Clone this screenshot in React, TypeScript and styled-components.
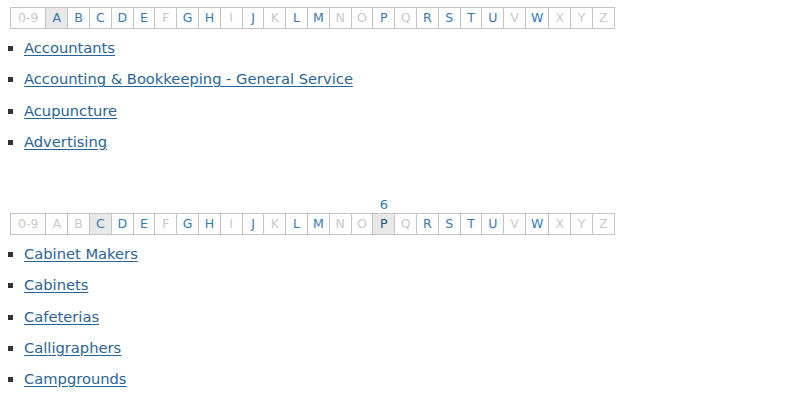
import React from "react";
import styled, { createGlobalStyle } from "styled-components";

const GlobalStyle = createGlobalStyle`
  html, body {
    margin: 0;
    padding: 0;
    background: #ffffff;
  }
  body {
    font-family: "DejaVu Sans", Verdana, sans-serif;
    font-size: 14.7px;
    color: #333333;
  }
`;

const Page = styled.div`
  display: flex;
  flex-direction: column;
  padding: 7px 0 0 10px;
`;

const Section = styled.section<{ $gap?: number }>`
  display: flex;
  flex-direction: column;
  align-items: flex-start;
  margin-top: ${(p) => p.$gap ?? 0}px;
`;

const AlphaBar = styled.div`
  display: inline-flex;
  border: 1px solid #c4c4c4;
  font-size: 12.5px;
  line-height: 20px;
`;

const Letter = styled.a<{ $state: "on" | "off" | "active" | "hover"; $wide?: boolean }>`
  position: relative;
  display: block;
  padding: 0 ${(p) => (p.$wide ? 7 : 5)}px;
  min-width: 10.8px;
  text-align: center;
  text-decoration: none;
  border-left: 1px solid #c4c4c4;
  color: ${(p) =>
    p.$state === "off" ? "#c9c9c9" : p.$state === "hover" ? "#23527c" : "#337ab7"};
  background: ${(p) => (p.$state === "active" || p.$state === "hover" ? "#e8e8e8" : "#ffffff")};
  &:first-child {
    border-left: none;
  }
`;

const Count = styled.span`
  position: absolute;
  left: 0;
  right: 0;
  bottom: 100%;
  margin-bottom: 2px;
  text-align: center;
  font-size: 13px;
  line-height: 15px;
  color: #337ab7;
`;

const List = styled.ul`
  margin: 8px 0 0 -10px;
  padding: 0 0 0 24px;
  list-style: square;
`;

const Item = styled.li`
  line-height: 21px;
  margin-bottom: 10.3px;
  &::marker {
    color: #333333;
  }
`;

const Link = styled.a`
  color: #2a6496;
  text-decoration: underline;
  text-underline-offset: 2px;
`;

const letters = ["0-9", ..."ABCDEFGHIJKLMNOPQRSTUVWXYZ".split("")];
const enabled = "ABCDEGHJLMPRSTUW";

type Bar = { active: string; off: string; hover?: string; count?: number };

const Alphabet = ({ active, off, hover, count }: Bar) => (
  <AlphaBar>
    {letters.map((l) => {
      const isOff = l === "0-9" || !enabled.includes(l) || off.includes(l);
      const state =
        l === active ? "active" : l === hover ? "hover" : isOff ? "off" : "on";
      return (
        <Letter key={l} $state={state} $wide={l.length > 1}>
          {l === hover && count != null && <Count>{count}</Count>}
          {l}
        </Letter>
      );
    })}
  </AlphaBar>
);

const first = ["Accountants", "Accounting & Bookkeeping - General Service", "Acupuncture", "Advertising"];
const second = ["Cabinet Makers", "Cabinets", "Cafeterias", "Calligraphers", "Campgrounds"];

export default function App() {
  return (
    <>
      <GlobalStyle />
      <Page>
        <Section>
          <Alphabet active="A" off="" />
          <List>
            {first.map((t) => (
              <Item key={t}>
                <Link href="#">{t}</Link>
              </Item>
            ))}
          </List>
        </Section>
        <Section $gap={51}>
          <Alphabet active="C" off="AB" hover="P" count={6} />
          <List>
            {second.map((t) => (
              <Item key={t}>
                <Link href="#">{t}</Link>
              </Item>
            ))}
          </List>
        </Section>
      </Page>
    </>
  );
}
